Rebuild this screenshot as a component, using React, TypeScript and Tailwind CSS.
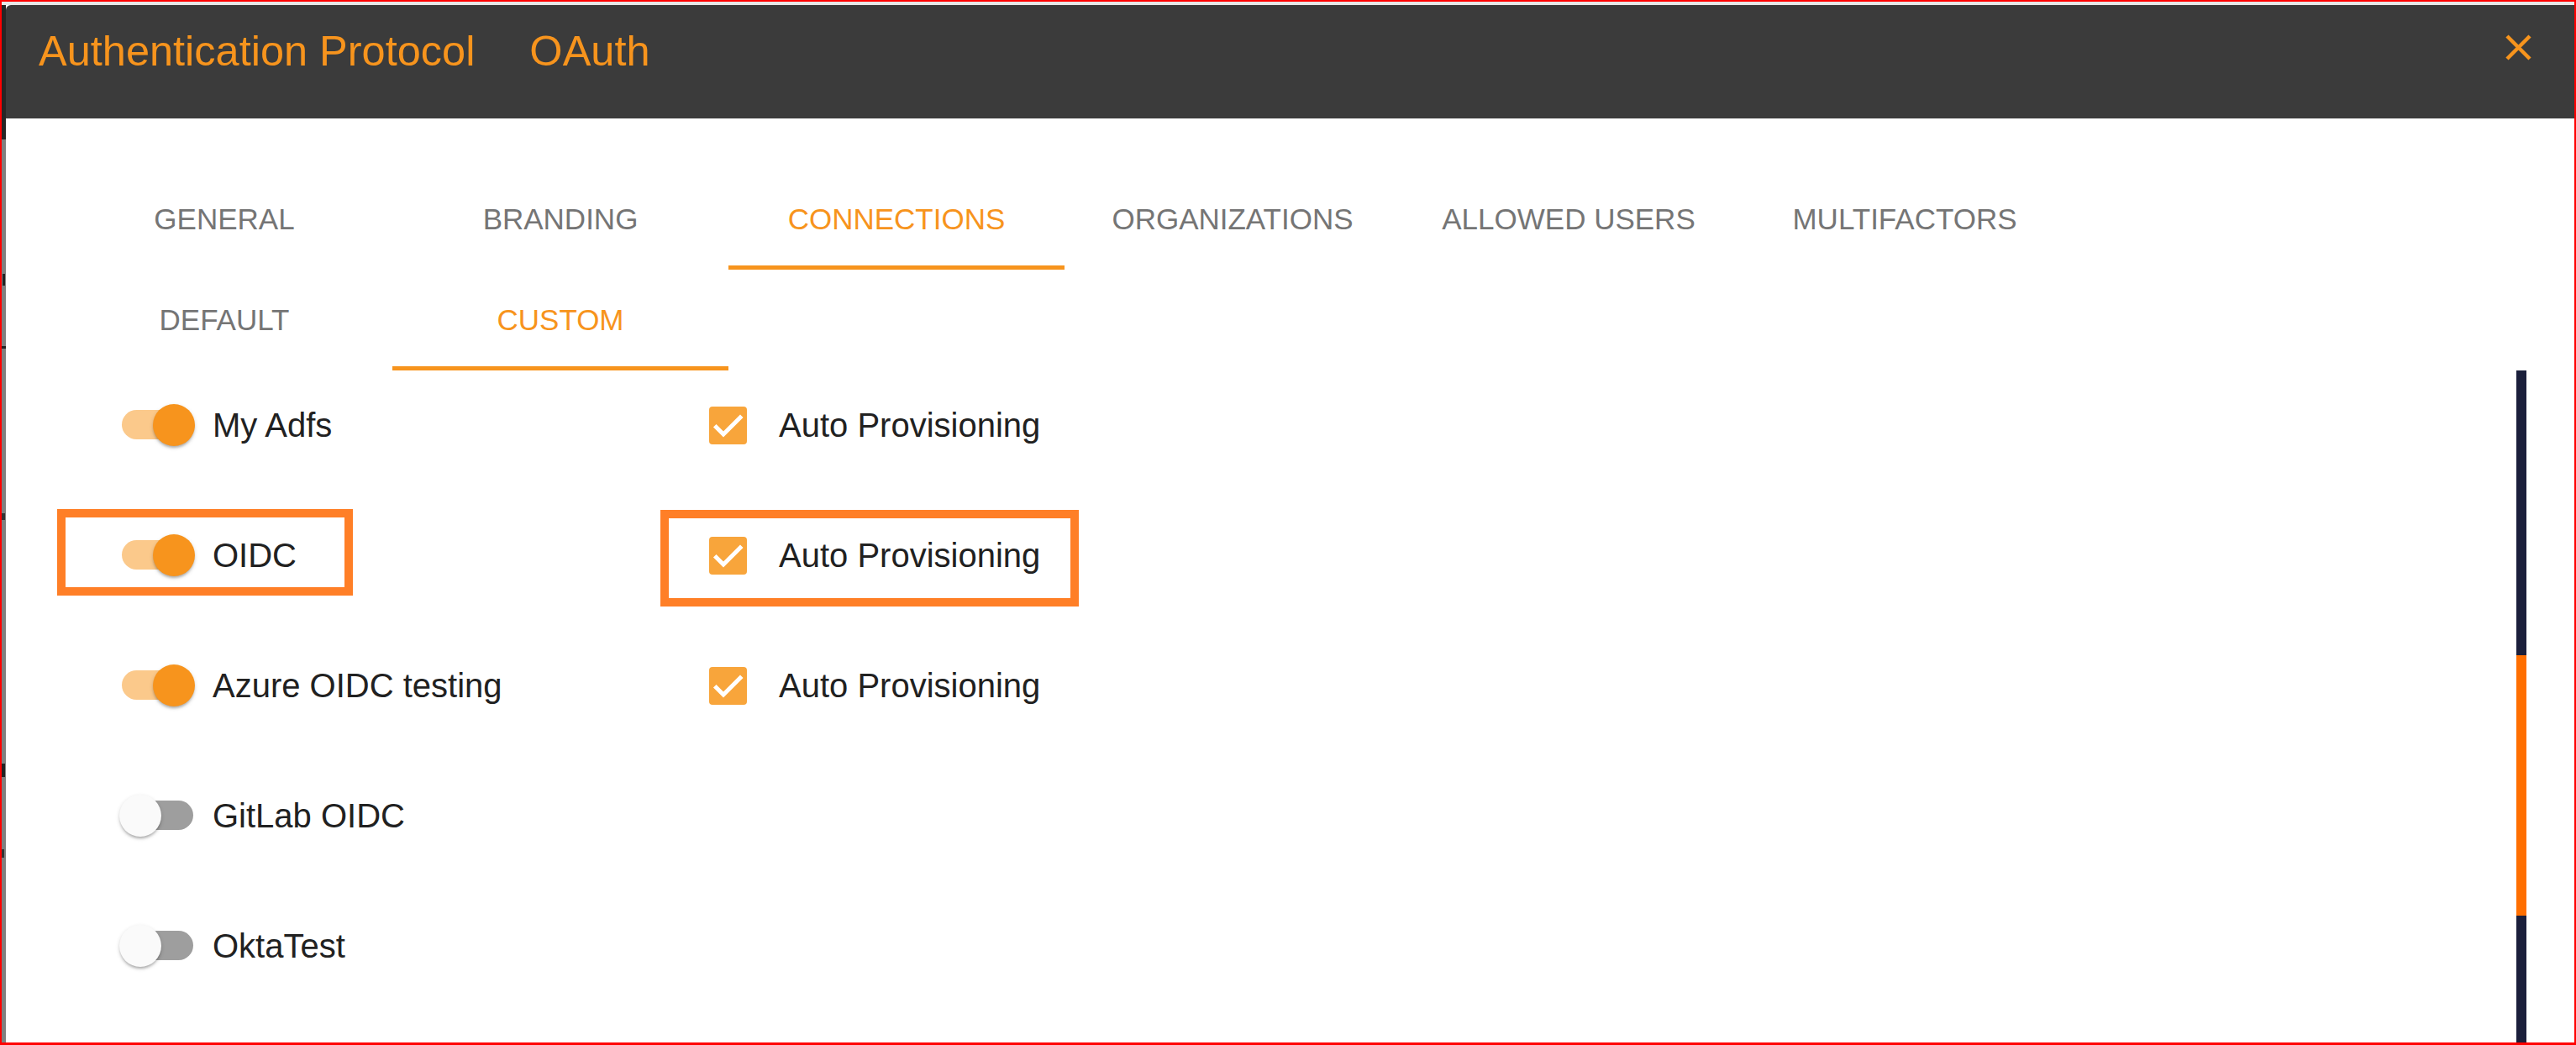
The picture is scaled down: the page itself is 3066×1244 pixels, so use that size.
import type { ReactNode } from 'react'

interface Connection {
  name: string
  enabled: boolean
  autoProvisioning?: boolean
  highlighted?: boolean
}

const connections: Connection[] = [
  { name: 'My Adfs', enabled: true, autoProvisioning: true },
  { name: 'OIDC', enabled: true, autoProvisioning: true, highlighted: true },
  { name: 'Azure OIDC testing', enabled: true, autoProvisioning: true },
  { name: 'GitLab OIDC', enabled: false },
  { name: 'OktaTest', enabled: false },
]

const mainTabs = ['GENERAL', 'BRANDING', 'CONNECTIONS', 'ORGANIZATIONS', 'ALLOWED USERS', 'MULTIFACTORS']
const subTabs = ['DEFAULT', 'CUSTOM']

const font = 'font-["Liberation_Sans",Arial,sans-serif]'

function Tab({ label, active }: { label: string; active?: boolean }) {
  return (
    <div className="flex h-[120px] w-[400px] flex-col">
      <div
        className={`flex flex-1 items-center justify-center pt-[5px] text-[35px] leading-[40px] ${active ? 'text-[#f7941d]' : 'text-[#757575]'}`}
      >
        {label}
      </div>
      <div className={`h-[5px] ${active ? 'bg-[#f7941d]' : 'bg-transparent'}`} />
    </div>
  )
}

function Switch({ checked }: { checked: boolean }) {
  return (
    <div className="relative h-[50px] w-[90px] shrink-0">
      <div
        className={`absolute left-[3px] top-[7px] h-[35px] w-[85px] rounded-full ${checked ? 'bg-[#fbc98b]' : 'bg-[#9e9e9e]'}`}
      />
      <div
        className={`absolute top-0 h-[50px] w-[50px] rounded-full shadow-[0_3px_3px_-1px_rgba(0,0,0,0.22),0_2px_5px_0_rgba(0,0,0,0.16)] ${checked ? 'left-[40px] bg-[#f7941d]' : 'left-0 bg-[#fafafa]'}`}
      />
    </div>
  )
}

function Checkbox() {
  return (
    <div className="flex h-[45px] w-[45px] shrink-0 items-center justify-center rounded-[4px] bg-[#f8a53b]">
      <svg width="45" height="45" viewBox="0 0 45 45" fill="none">
        <path d="M8.5 24.5 L17 33 L37 13" stroke="#ffffff" strokeWidth="5" strokeLinecap="square" />
      </svg>
    </div>
  )
}

function Annotation({ className }: { className: string }) {
  return <div className={`pointer-events-none absolute border-[10px] border-[#ff7f27] ${className}`} />
}

function Row({ item, last }: { item: Connection; last: boolean }): ReactNode {
  return (
    <div className={`relative flex h-[50px] items-center pl-[135px] ${last ? '' : 'mb-[105px]'}`}>
      <div className="flex w-[702px] items-center gap-[21px]">
        <Switch checked={item.enabled} />
        <span className="text-[40px] leading-[44px] text-[#212121]">{item.name}</span>
      </div>
      {item.autoProvisioning && (
        <div className="flex items-center gap-[38px]">
          <Checkbox />
          <span className="text-[40px] leading-[44px] text-[#212121]">Auto Provisioning</span>
        </div>
      )}
      {item.highlighted && (
        <>
          <Annotation className="left-[61px] top-[-30px] h-[103px] w-[352px]" />
          <Annotation className="left-[779px] top-[-29px] h-[115px] w-[498px]" />
        </>
      )}
    </div>
  )
}

export default function App() {
  return (
    <div className={`h-[1244px] w-[3066px] bg-[#ff0000] pb-[3px] pl-[2px] pr-[2px] pt-[2px] ${font}`}>
      <div className="flex h-full flex-col">
        <div className="h-[4px] bg-[#e8e8e8]" />
        <div className="flex flex-1">
          {/* sliver of the page behind the dialog */}
          <div className="flex w-[5px] flex-col">
            <div className="h-[160px] bg-[#262626]" />
            <div className="flex flex-1 flex-col bg-[#808080]">
              <div className="ml-[1px] mt-[160px] h-[14px] w-[3px] bg-[#222]" />
              <div className="mt-[72px] h-[3px] w-[5px] bg-[#222]" />
              <div className="mt-[196px] h-[8px] w-[4px] bg-[#333]" />
              <div className="mt-[290px] h-[16px] w-[4px] bg-[#222]" />
              <div className="mt-[86px] h-[10px] w-[3px] bg-[#333]" />
            </div>
          </div>

          <div className="flex flex-1 flex-col bg-white">
            <div className="flex h-[135px] items-start justify-between rounded-tl-[6px] bg-[#3b3b3b] pl-[39px] pt-[30px]">
              <div className="flex text-[50.5px] leading-[50px] text-[#f7941d]">
                <span>Authentication Protocol</span>
                <span className="ml-[65px]">OAuth</span>
              </div>
              <svg className="mr-[51px] mt-[5px]" width="31" height="31" viewBox="0 0 31 31">
                <path d="M2 2 L29 29 M29 2 L2 29" stroke="#f7941d" strokeWidth="4.5" />
              </svg>
            </div>

            <div className="pl-[60px] pt-[60px]">
              <div className="flex">
                {mainTabs.map((t) => (
                  <Tab key={t} label={t} active={t === 'CONNECTIONS'} />
                ))}
              </div>
              <div className="flex">
                {subTabs.map((t) => (
                  <Tab key={t} label={t} active={t === 'CUSTOM'} />
                ))}
              </div>
            </div>

            <div className="flex flex-1">
              <div className="flex-1 pt-[40px]">
                {connections.map((c, i) => (
                  <Row key={c.name} item={c} last={i === connections.length - 1} />
                ))}
              </div>
              <div className="mr-[57px] flex w-[12px] flex-col bg-[#1b1f3b]">
                <div className="h-[339px]" />
                <div className="h-[310px] bg-[#ff6f00]" />
              </div>
            </div>
          </div>
        </div>
      </div>
    </div>
  )
}
